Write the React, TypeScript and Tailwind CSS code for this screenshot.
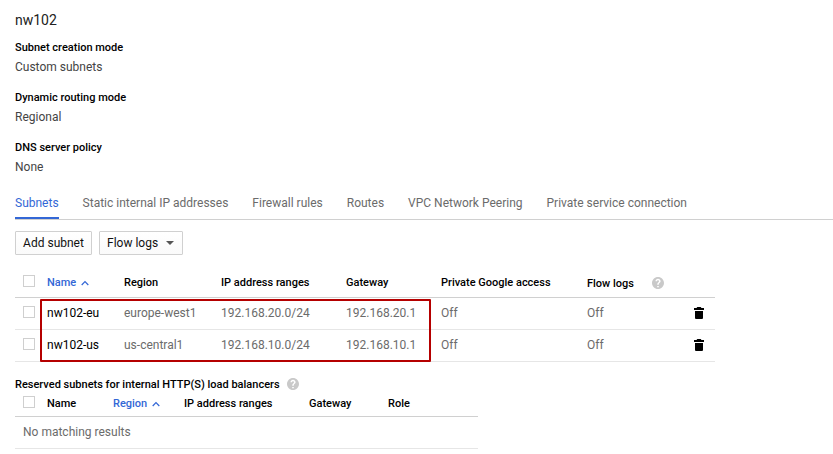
import React from "react";

const details = [
  { label: "Subnet creation mode", value: "Custom subnets" },
  { label: "Dynamic routing mode", value: "Regional" },
  { label: "DNS server policy", value: "None" },
];

const tabs = [
  "Subnets",
  "Static internal IP addresses",
  "Firewall rules",
  "Routes",
  "VPC Network Peering",
  "Private service connection",
];

const subnets = [
  { name: "nw102-eu", region: "europe-west1", range: "192.168.20.0/24", gateway: "192.168.20.1" },
  { name: "nw102-us", region: "us-central1", range: "192.168.10.0/24", gateway: "192.168.10.1" },
];

const subnetGrid = "grid grid-cols-[32px_77px_97px_125px_95px_146px_105px_23px] items-center";
const reservedGrid = "grid grid-cols-[32px_66px_71px_125px_79px_90px] items-center";

function Checkbox({ className = "" }: { className?: string }) {
  return <span className={`ml-2 block size-3 border border-[#cfcfcf] bg-white ${className}`} />;
}

function HelpIcon({ className = "" }: { className?: string }) {
  return (
    <svg viewBox="2 2 20 20" className={`size-3 shrink-0 fill-[#c9c9c9] ${className}`}>
      <path d="M12 2C6.48 2 2 6.48 2 12s4.48 10 10 10 10-4.48 10-10S17.52 2 12 2zm1.3 17.2h-2.6v-2.4h2.6v2.4zm2.07-7.95l-.9.92C13.6 13 13.3 13.5 13.3 15h-2.6v-.5c0-1.1.45-2.1 1.17-2.83l1.24-1.26c.3-.36.49-.86.49-1.41 0-.9-.7-1.6-1.6-1.6s-1.6.7-1.6 1.6H7.8c0-2.4 1.9-4.2 4.2-4.2s4.3 1.8 4.3 4.2c0 .88-.36 1.68-.93 2.25z" />
    </svg>
  );
}

function SortCaret() {
  return (
    <svg viewBox="0 0 8 6" className="ml-[5px] h-1.5 w-2 fill-none stroke-[#3367d6]" strokeWidth="1.2">
      <path d="M0.7 5 4 1.5 7.3 5" />
    </svg>
  );
}

function TrashIcon() {
  return (
    <svg viewBox="0 0 10 12" className="ml-0.5 h-3 w-2.5 fill-black">
      <path d="M0 1h2.5l.8-1h3.4l.8 1H10v2H0zM1 4h8v7a1 1 0 0 1-1 1H2a1 1 0 0 1-1-1z" />
    </svg>
  );
}

export default function App() {
  return (
    <main className="h-[454px] w-[833px] overflow-hidden whitespace-nowrap bg-white pl-[15px] font-['Roboto',sans-serif] text-[12px] leading-4 text-[#6b6b6b]">
      <h1 className="pt-3 text-[14px] leading-4 text-[#212121]">nw102</h1>

      <dl className="pt-[9px]">
        {details.map((d) => (
          <div key={d.label} className="h-[50px] pt-[3px]">
            <dt className="text-[11px] font-medium leading-4 text-black">{d.label}</dt>
            <dd className="pt-[3px] text-[#444]">{d.value}</dd>
          </div>
        ))}
      </dl>

      <nav className="flex h-[33px] gap-6 border-b border-[#d0d0d0]">
        {tabs.map((tab, i) => (
          <span
            key={tab}
            className={
              i === 0
                ? "h-[32px] border-b-2 border-[#3367d6] pt-2 text-[#3367d6]"
                : "h-[32px] pt-2"
            }
          >
            {tab}
          </span>
        ))}
      </nav>

      <div className="flex gap-[7px] pt-[11px]">
        <button className="h-6 w-[77px] rounded-[1px] border border-[#d0d0d0] bg-gradient-to-b from-white to-[#fafafa] text-[#111]">
          Add subnet
        </button>
        <button className="flex h-6 w-[84px] items-center rounded-[1px] border border-[#d0d0d0] bg-gradient-to-b from-white to-[#fafafa] pl-[7px] text-[#111]">
          Flow logs
          <svg viewBox="0 0 8 4" className="ml-2 h-1 w-2 fill-[#555]">
            <path d="M0 0h8L4 4z" />
          </svg>
        </button>
      </div>

      <section className="relative mt-[11px] w-[700px]">
        <div className={`${subnetGrid} h-8 border-b border-[#d0d0d0] pt-[3px] text-[11px] font-medium text-black`}>
          <Checkbox className="mb-1" />
          <span className="flex items-center text-[#3367d6]">
            Name
            <SortCaret />
          </span>
          <span>Region</span>
          <span>IP address ranges</span>
          <span>Gateway</span>
          <span>Private Google access</span>
          <span className="flex items-center pt-0.5">
            Flow logs
            <HelpIcon className="mb-0.5 ml-[18px]" />
          </span>
        </div>
        {subnets.map((s) => (
          <div key={s.name} className={`${subnetGrid} h-8 border-b border-[#e6e6e6] pb-[2px]`}>
            <Checkbox className="mb-px" />
            <span className="text-black">{s.name}</span>
            <span>{s.region}</span>
            <span>{s.range}</span>
            <span>{s.gateway}</span>
            <span>Off</span>
            <span>Off</span>
            <TrashIcon />
          </div>
        ))}
        <div className="absolute left-[25px] top-[33px] h-[63px] w-[391px] rounded-[1px] border-2 border-[#b50000]" />
      </section>

      <section className="w-[463px] pt-[15px]">
        <h2 className="flex h-4 items-center text-[11px] font-medium text-black">
          Reserved subnets for internal HTTP(S) load balancers
          <HelpIcon className="mb-0.5 ml-[7px]" />
        </h2>
        <div className={`${reservedGrid} h-6 border-b border-[#d0d0d0] pb-px text-[11px] font-medium text-black`}>
          <Checkbox className="mb-1" />
          <span>Name</span>
          <span className="flex items-center text-[#3367d6]">
            Region
            <SortCaret />
          </span>
          <span>IP address ranges</span>
          <span>Gateway</span>
          <span>Role</span>
        </div>
        <p className="h-8 border-b border-[#e6e6e6] pl-2 pt-[7px]">No matching results</p>
      </section>
    </main>
  );
}
